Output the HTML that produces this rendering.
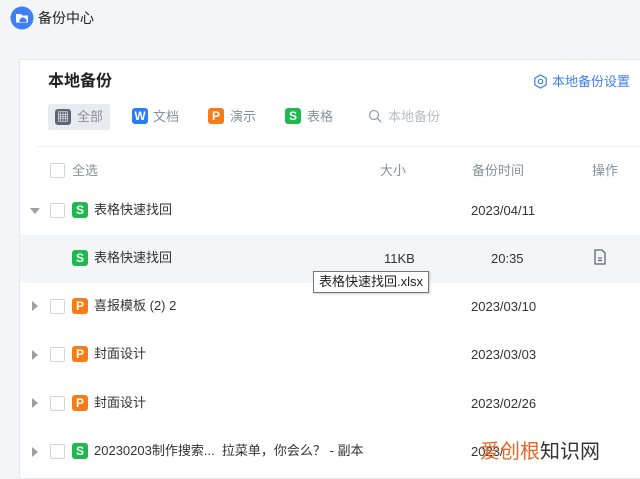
<!DOCTYPE html>
<html><head><meta charset="utf-8"><style>
*{margin:0;padding:0;box-sizing:border-box}
body{width:640px;height:466px;overflow:hidden;background:#f4f5f7;font-family:"Liberation Sans","Noto Sans CJK SC",sans-serif;color:#333;font-size:13px;position:relative}
.a{position:absolute;white-space:nowrap;line-height:16px}
.card{position:absolute;left:19px;top:59px;width:640px;height:420px;background:#fff;border:1px solid #e6e8eb}
.ic{position:absolute;width:16px;height:16px;border-radius:3px;color:#fff;font-weight:bold;font-size:12px;line-height:16px;text-align:center}
.s{background:#1fb94f}.p{background:#f77b16}.w{background:#2b7df5}
.cb{position:absolute;width:15px;height:15px;border:1px solid #d0d3d8;border-radius:2px;background:#fff}
.tri{position:absolute;width:0;height:0;border-top:5px solid transparent;border-bottom:5px solid transparent;border-left:6px solid #9aa0a8}
.trd{position:absolute;width:0;height:0;border-left:5px solid transparent;border-right:5px solid transparent;border-top:6px solid #9aa0a8}
.g{color:#8a9099}
</style></head><body>
<svg class="a" style="left:10px;top:6px" width="24" height="24" viewBox="0 0 24 24"><circle cx="12" cy="12" r="11.5" fill="#3d7ff5"/><path d="M6 8h5l1.5 1.5H18v7H6z" fill="#fff"/><path d="M10 16a2 2 0 0 1 1-3.5a2.5 2.5 0 0 1 4.5 0.5a1.6 1.6 0 0 1 0.5 3z" fill="#3d7ff5"/></svg>
<div class="a" style="left:38px;top:10px;font-size:14px;color:#222">备份中心</div>
<div class="card"></div>
<div class="a" style="left:48px;top:74px;font-size:16px;font-weight:bold;color:#222">本地备份</div>
<svg class="a" style="left:533px;top:74px" width="15" height="15" viewBox="0 0 15 15"><path d="M7.5 1l5.7 3.2v6.6L7.5 14 1.8 10.8V4.2z" fill="none" stroke="#3d7ff5" stroke-width="1.2"/><circle cx="7.5" cy="7.5" r="2.2" fill="none" stroke="#3d7ff5" stroke-width="1.2"/></svg>
<div class="a" style="left:552px;top:74px;color:#3d7ff5">本地备份设置</div>
<div class="a" style="left:48px;top:104px;width:62px;height:26px;background:#e8ebf0;border-radius:2px"></div>
<div class="ic" style="left:55px;top:109px;background:#5c6678">▦</div>
<div class="a g" style="left:77px;top:109px">全部</div>
<div class="ic w" style="left:132px;top:108px">W</div><div class="a g" style="left:153px;top:109px">文档</div>
<div class="ic p" style="left:208px;top:108px">P</div><div class="a g" style="left:230px;top:109px">演示</div>
<div class="ic s" style="left:285px;top:108px">S</div><div class="a g" style="left:307px;top:109px">表格</div>
<svg class="a" style="left:368px;top:109px" width="14" height="14" viewBox="0 0 14 14"><circle cx="6" cy="6" r="4.5" fill="none" stroke="#9aa0a8" stroke-width="1.3"/><path d="M9.3 9.3L13 13" stroke="#9aa0a8" stroke-width="1.3"/></svg>
<div class="a" style="left:388px;top:109px;color:#b8bcc2">本地备份</div>
<div class="a" style="left:37px;top:146px;width:603px;height:1px;background:#eceef1"></div>
<div class="cb" style="left:50px;top:163px"></div>
<div class="a g" style="left:72px;top:163px">全选</div>
<div class="a g" style="left:380px;top:163px">大小</div>
<div class="a g" style="left:472px;top:163px">备份时间</div>
<div class="a g" style="left:592px;top:163px">操作</div>
<div class="trd" style="left:30px;top:208px"></div>
<div class="cb" style="left:50px;top:203px"></div>
<div class="ic s" style="left:72px;top:202px">S</div>
<div class="a" style="left:94px;top:202px">表格快速找回</div>
<div class="a" style="left:471px;top:203px">2023/04/11</div>
<div class="a" style="left:20px;top:235px;width:620px;height:48px;background:#f4f5f7"></div>
<div class="ic s" style="left:72px;top:250px">S</div>
<div class="a" style="left:94px;top:250px">表格快速找回</div>
<div class="a" style="left:384px;top:251px">11KB</div>
<div class="a" style="left:491px;top:251px">20:35</div>
<svg class="a" style="left:593px;top:249px" width="14" height="16" viewBox="0 0 14 16"><path d="M2 1h7l3 3v11H2z" fill="none" stroke="#5c6678" stroke-width="1.3"/><path d="M5 9h4M5 11.5h4" stroke="#5c6678" stroke-width="1.2"/></svg>
<div class="a" style="left:313px;top:271px;padding:2px 5px;border:1px solid #767676;background:#fff;font-size:13px;color:#222;box-shadow:1px 1px 2px rgba(0,0,0,.2)">表格快速找回.xlsx</div>
<div class="tri" style="left:32px;top:301px"></div><div class="cb" style="left:50px;top:299px"></div><div class="ic p" style="left:72px;top:298px">P</div><div class="a" style="left:94px;top:298px">喜报模板 (2) 2</div><div class="a" style="left:471px;top:299px">2023/03/10</div>
<div class="tri" style="left:32px;top:350px"></div><div class="cb" style="left:50px;top:347px"></div><div class="ic p" style="left:72px;top:346px">P</div><div class="a" style="left:94px;top:346px">封面设计</div><div class="a" style="left:471px;top:347px">2023/03/03</div>
<div class="tri" style="left:32px;top:398px"></div><div class="cb" style="left:50px;top:396px"></div><div class="ic p" style="left:72px;top:395px">P</div><div class="a" style="left:94px;top:395px">封面设计</div><div class="a" style="left:471px;top:396px">2023/02/26</div>
<div class="tri" style="left:32px;top:447px"></div><div class="cb" style="left:50px;top:444px"></div><div class="ic s" style="left:72px;top:443px">S</div><div class="a" style="left:94px;top:443px">20230203制作搜索...&nbsp; 拉菜单，你会么？ - 副本</div><div class="a" style="left:471px;top:444px">2023/</div>
<div class="a" style="left:480px;top:440px;font-size:20px;line-height:24px;color:#e2682a">爱创根<span style="color:#333">知识网</span></div>
</body></html>
